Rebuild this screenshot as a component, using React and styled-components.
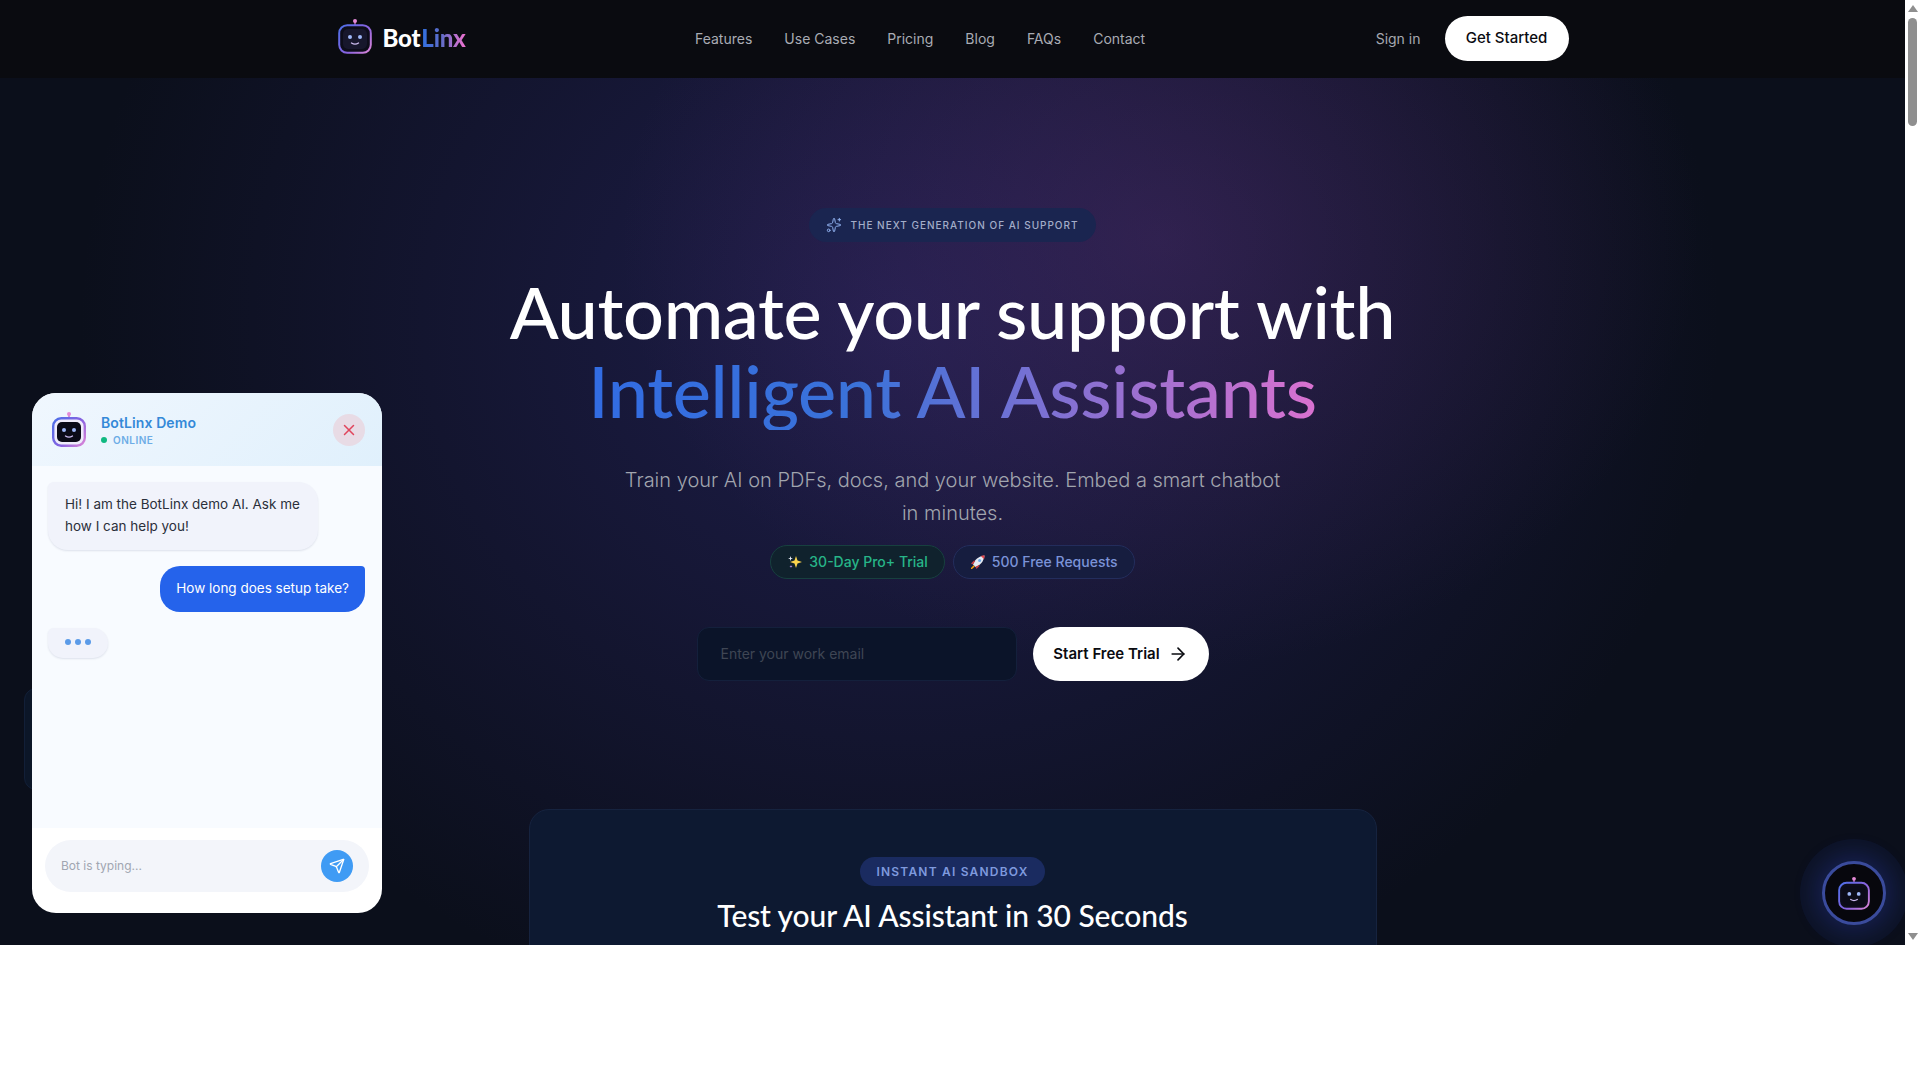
import React from 'react';
import styled, { createGlobalStyle } from 'styled-components';
import { ArrowRight, Send, Sparkles, X } from 'lucide-react';

const HEADING_FONT = '"Lato", "Liberation Sans", sans-serif';

const GlobalStyle = createGlobalStyle`
  html, body {
    margin: 0;
    height: 100%;
    background: #ffffff;
    overflow: hidden;
  }
  * {
    box-sizing: border-box;
  }
  body {
    font-family: "Inter", "Liberation Sans", sans-serif;
  }
`;

const Viewport = styled.div`
  display: flex;
  height: 945px;
  overflow: hidden;
`;

const Page = styled.div`
  position: relative;
  flex: 1;
  min-width: 0;
  overflow: hidden;
  background:
    radial-gradient(ellipse 540px 430px at 1160px 240px, rgba(100, 52, 124, 0.32), transparent 100%),
    radial-gradient(ellipse 820px 720px at 900px 320px, rgba(42, 38, 104, 0.62), transparent 100%),
    #0b0f1b;
`;

const Scrollbar = styled.div`
  width: 15px;
  display: flex;
  flex-direction: column;
  align-items: center;
  background: #ffffff;
`;

const ScrollArrow = styled.div`
  width: 0;
  height: 0;
  margin: ${(p) => (p.$down ? '0 0 5px' : '5px 0 0')};
  border-left: 5px solid transparent;
  border-right: 5px solid transparent;
  border-top: ${(p) => (p.$down ? '7px solid #8f8f8f' : 'none')};
  border-bottom: ${(p) => (p.$down ? 'none' : '7px solid #8f8f8f')};
`;

const ScrollThumb = styled.div`
  width: 9px;
  height: 108px;
  margin-top: 6px;
  border-radius: 5px;
  background: #8f8f8f;
`;

const ScrollSpace = styled.div`
  flex: 1;
`;

const Header = styled.header`
  height: 78px;
  background: #0a0b10;
`;

const HeaderInner = styled.div`
  max-width: 1280px;
  height: 100%;
  margin: 0 auto;
  padding: 0 24px 2px;
  display: flex;
  align-items: center;
`;

const Brand = styled.div`
  width: 358.5px;
  padding: 0 0 3px 1px;
  display: flex;
  align-items: center;
  gap: 11px;
`;

const BrandName = styled.div`
  margin-top: 2px;
  font-family: ${HEADING_FONT};
  font-size: 24px;
  font-weight: 900;
  letter-spacing: -0.2px;
  color: #ffffff;
  display: flex;
  gap: 1px;
`;

const GradientText = styled.span`
  background: linear-gradient(90deg, #2f6fe0 0%, #5f6cc8 45%, #f472d0 100%);
  -webkit-background-clip: text;
  background-clip: text;
  color: transparent;
`;

const Nav = styled.nav`
  display: flex;
  gap: 32px;
`;

const NavLink = styled.a`
  font-size: 14px;
  color: #a9acb4;
`;

const HeaderActions = styled.div`
  margin-left: auto;
  display: flex;
  align-items: center;
  gap: 24px;
`;

const SignIn = styled.a`
  font-size: 14px;
  color: #a6a9b0;
`;

const GetStarted = styled.button`
  height: 45px;
  width: 124px;
  padding: 0 0 2px;
  border: none;
  border-radius: 999px;
  background: #ffffff;
  color: #0a0b10;
  font: 500 15px "Inter", sans-serif;
`;

const Hero = styled.main`
  display: flex;
  flex-direction: column;
  align-items: center;
  padding-top: 130px;
  text-align: center;
`;

const Eyebrow = styled.div`
  height: 34px;
  padding: 0 17px;
  display: flex;
  align-items: center;
  gap: 8px;
  border-radius: 999px;
  background: #1a2550;
  color: #a3adc9;
  font-size: 10px;
  font-weight: 500;
  letter-spacing: 0.1em;
  text-transform: uppercase;

  svg {
    color: #8fb0ee;
  }
`;

const Title = styled.h1`
  margin: 30px 0 0;
  font-family: ${HEADING_FONT};
  font-size: 72px;
  font-weight: 500;
  letter-spacing: -0.35px;
  line-height: 79px;
  color: #ffffff;
`;

const TitleAccent = styled.span`
  display: block;
  background: linear-gradient(90deg, #2f6ae6 0%, #3b72d8 40%, #a070d0 72%, #f472d0 100%);
  -webkit-background-clip: text;
  background-clip: text;
  color: transparent;
`;

const Subtitle = styled.p`
  width: 672px;
  margin: 34px 0 0;
  font-size: 20px;
  font-weight: 300;
  line-height: 33px;
  color: #a1a5ae;
`;

const Perks = styled.div`
  margin-top: 15px;
  display: flex;
  gap: 8px;
`;

const Perk = styled.div`
  height: 34px;
  padding: 0 16px 1px;
  display: flex;
  align-items: center;
  gap: 6px;
  border-radius: 999px;
  font-size: 14px;
  font-weight: 500;
  color: ${(p) => (p.$tone === 'green' ? '#27b588' : '#7b93d8')};
  background: ${(p) => (p.$tone === 'green' ? '#10222d' : '#161d3f')};
  border: 1px solid ${(p) => (p.$tone === 'green' ? '#17403f' : '#232d5c')};
`;

const SignupForm = styled.div`
  margin-top: 48px;
  display: flex;
  gap: 16px;
`;

const EmailField = styled.div`
  width: 320px;
  height: 54px;
  padding: 0 23px 1px;
  display: flex;
  align-items: center;
  border-radius: 12px;
  background: #0b1429;
  border: 1px solid #14203c;
  color: #3f4654;
  font-size: 14px;
`;

const TrialButton = styled.button`
  width: 176px;
  height: 54px;
  padding: 0 0 1px;
  border: none;
  border-radius: 999px;
  background: #ffffff;
  color: #0a0b10;
  font: 600 15px "Inter", sans-serif;
  display: flex;
  align-items: center;
  justify-content: center;
  gap: 8px;
`;

const SandboxCard = styled.section`
  width: 848px;
  margin-top: 128px;
  padding-top: 47px;
  height: 400px;
  flex-shrink: 0;
  display: flex;
  flex-direction: column;
  align-items: center;
  border-radius: 20px;
  background: #0d1931;
  border: 1px solid #16233f;
`;

const SandboxTag = styled.div`
  height: 29px;
  padding: 0 17px;
  display: flex;
  align-items: center;
  border-radius: 999px;
  background: #1a2b60;
  color: #7f9ade;
  font-size: 12px;
  font-weight: 600;
  letter-spacing: 0.1em;
`;

const SandboxTitle = styled.h2`
  margin: 11px 0 0;
  font-family: ${HEADING_FONT};
  font-size: 30px;
  font-weight: 500;
  letter-spacing: -0.1px;
  line-height: 36px;
  color: #ffffff;
`;

// a faint panel that peeks out from behind the chat widget
const ChatBackdrop = styled.div`
  position: absolute;
  left: 24px;
  top: 688px;
  width: 40px;
  height: 102px;
  border-radius: 12px;
  background: #0c1628;
  border: 1px solid #121f38;
`;

const ChatWidget = styled.aside`
  position: absolute;
  left: 32px;
  top: 393px;
  width: 350px;
  height: 520px;
  display: flex;
  flex-direction: column;
  overflow: hidden;
  border-radius: 24px;
  background: #ffffff;
`;

const ChatHeader = styled.div`
  height: 73px;
  padding: 0 17px 0 20px;
  display: flex;
  align-items: center;
  gap: 15px;
  background: linear-gradient(135deg, #f0f7fe, #e0f0fc);
`;

const ChatIdentity = styled.div`
  flex: 1;
  padding-top: 2px;
  display: flex;
  flex-direction: column;
  gap: 3px;
`;

const ChatName = styled.div`
  font-size: 14px;
  font-weight: 600;
  letter-spacing: 0.1px;
  line-height: 16px;
  color: #3489d8;
`;

const ChatStatus = styled.div`
  display: flex;
  align-items: center;
  gap: 6px;
  font-size: 10px;
  font-weight: 600;
  letter-spacing: 0.05em;
  color: #6cace6;
`;

const StatusDot = styled.span`
  width: 6px;
  height: 6px;
  border-radius: 50%;
  background: #10b981;
`;

const CloseButton = styled.button`
  width: 32px;
  height: 32px;
  padding: 0;
  display: flex;
  align-items: center;
  justify-content: center;
  border: none;
  border-radius: 50%;
  background: #e8dbe5;
  color: #e0455c;
`;

const Messages = styled.div`
  flex: 1;
  padding: 16px 17px 0 16px;
  display: flex;
  flex-direction: column;
  align-items: flex-start;
  gap: 16px;
  background: #f8fbff;
`;

const BotBubble = styled.div`
  width: 270px;
  padding: 11px 12px 13px 17px;
  border-radius: 6px 20px 20px 20px;
  background: #f1f3fb;
  box-shadow: 0 1px 2px rgba(30, 40, 90, 0.12);
  color: #2b2f3a;
  font-size: 13.5px;
  line-height: 22px;
`;

const UserBubble = styled.div`
  align-self: flex-end;
  height: 46px;
  padding: 0 16px 2px;
  display: flex;
  align-items: center;
  border-radius: 20px 4px 20px 20px;
  background: #2563eb;
  color: #ffffff;
  font-size: 13.5px;
`;

const TypingBubble = styled.div`
  width: 60px;
  height: 30px;
  padding-bottom: 2px;
  display: flex;
  align-items: center;
  justify-content: center;
  gap: 4px;
  border-radius: 6px 16px 16px 16px;
  background: #f1f3fb;
  box-shadow: 0 1px 2px rgba(30, 40, 90, 0.12);
`;

const TypingDot = styled.span`
  width: 6px;
  height: 6px;
  border-radius: 50%;
  background: #5b9be8;
`;

const ChatFooter = styled.div`
  height: 85px;
  padding: 12px 13px 0 13px;
`;

const ChatInput = styled.div`
  height: 52px;
  padding: 0 16px;
  display: flex;
  align-items: center;
  justify-content: space-between;
  border-radius: 26px;
  background: #f3f5fa;
  color: #a1a6b1;
  font-size: 12px;
`;

const ChatPlaceholder = styled.span`
  margin-bottom: 2px;
`;

const SendButton = styled.button`
  width: 32px;
  height: 32px;
  padding: 0;
  display: flex;
  align-items: center;
  justify-content: center;
  border: none;
  border-radius: 50%;
  background: #3f9bf4;
  color: #ffffff;
`;

const Launcher = styled.button`
  position: absolute;
  right: 19px;
  top: 861px;
  width: 64px;
  height: 64px;
  padding: 0;
  display: flex;
  align-items: center;
  justify-content: center;
  border: 3px solid #3a4b9c;
  border-radius: 50%;
  background: #07070d;
  box-shadow: 0 0 0 22px rgba(40, 60, 150, 0.1), 0 0 20px 8px rgba(40, 60, 170, 0.28);
`;

// the robot mark: the logo and launcher have a glowing frame, the chat avatar a pale one
const BotIcon = ({ id, size = 34, screen = '#17172c', pale = false }) => (
  <svg width={size} height={size * 1.06} viewBox="0 0 34 36" fill="none">
    <defs>
      <linearGradient id={id} x1="0" y1="8" x2="34" y2="36" gradientUnits="userSpaceOnUse">
        <stop offset="0" stopColor="#4a6fe8" />
        <stop offset="0.55" stopColor="#8a63e0" />
        <stop offset="1" stopColor="#e58ad6" />
      </linearGradient>
    </defs>
    <path d="M17 3v5" stroke="#c56fc0" strokeWidth="1.4" />
    <circle cx="17" cy="3" r="2" fill="#e58ad6" />
    <rect
      x="1.2"
      y="7.2"
      width="31.6"
      height="27.6"
      rx="8"
      fill={pale ? '#efecfb' : '#0d0d1a'}
      stroke={`url(#${id})`}
      strokeWidth={pale ? 2.4 : 2}
    />
    <rect x="5" y="11" width="24" height="20" rx="5" fill={screen} />
    <circle cx="12" cy="19" r="2" fill="#9fb8f8" />
    <circle cx="22" cy="19" r="2" fill="#9fb8f8" />
    <path d="M13.5 25c2.2 1.4 4.8 1.4 7 0" stroke="#cdbcf0" strokeWidth="1.4" strokeLinecap="round" />
  </svg>
);

const SparkleEmoji = () => (
  <svg width="16" height="16" viewBox="0 0 16 16">
    <path d="M9 2l1.5 4.5L15 8l-4.5 1.5L9 14l-1.5-4.5L3 8l4.5-1.5z" fill="#fbd34d" />
    <path d="M3.5 2l.6 1.9L6 4.5l-1.9.6L3.5 7l-.6-1.9L1 4.5l1.9-.6z" fill="#e7ecf7" />
    <path d="M4 11l.4 1.1 1.1.4-1.1.4L4 14l-.4-1.1-1.1-.4 1.1-.4z" fill="#b58be8" />
  </svg>
);

const RocketEmoji = () => (
  <svg width="16" height="16" viewBox="0 0 16 16">
    <path d="M3 10.5C4.5 6 8.5 2.2 14.5 1.5 13.8 7.5 10 11.5 5.5 13z" fill="#e4e9f2" />
    <path d="M10.8 1.9c1.2-.3 2.4-.4 3.7-.4 0 1.3-.1 2.5-.4 3.7z" fill="#e5484d" />
    <circle cx="9.6" cy="6.4" r="1.5" fill="#6fa8e8" />
    <path d="M3 10.5L1 9.5l3-3 1.2.4zM5.5 13l1 2 3-3-.4-1.2z" fill="#c43c45" />
    <path d="M3.6 11.2l1.2 1.2L2 15l-1 0 0-1z" fill="#f59e0b" />
  </svg>
);

const navLinks = ['Features', 'Use Cases', 'Pricing', 'Blog', 'FAQs', 'Contact'];

const App = () => (
  <>
    <GlobalStyle />
    <Viewport>
      <Page>
        <Header>
          <HeaderInner>
            <Brand>
              <BotIcon id="brand-bot" />
              <BrandName>
                <span>Bot</span>
                <GradientText>Linx</GradientText>
              </BrandName>
            </Brand>
            <Nav>
              {navLinks.map((link) => (
                <NavLink key={link}>{link}</NavLink>
              ))}
            </Nav>
            <HeaderActions>
              <SignIn>Sign in</SignIn>
              <GetStarted>Get Started</GetStarted>
            </HeaderActions>
          </HeaderInner>
        </Header>

        <Hero>
          <Eyebrow>
            <Sparkles size={16} strokeWidth={1.5} />
            The next generation of AI support
          </Eyebrow>
          <Title>
            Automate your support with
            <TitleAccent>Intelligent AI Assistants</TitleAccent>
          </Title>
          <Subtitle>
            Train your AI on PDFs, docs, and your website. Embed a smart chatbot in minutes.
          </Subtitle>
          <Perks>
            <Perk $tone="green">
              <SparkleEmoji />
              30-Day Pro+ Trial
            </Perk>
            <Perk $tone="blue">
              <RocketEmoji />
              500 Free Requests
            </Perk>
          </Perks>
          <SignupForm>
            <EmailField>Enter your work email</EmailField>
            <TrialButton>
              Start Free Trial
              <ArrowRight size={20} />
            </TrialButton>
          </SignupForm>
          <SandboxCard>
            <SandboxTag>INSTANT AI SANDBOX</SandboxTag>
            <SandboxTitle>Test your AI Assistant in 30 Seconds</SandboxTitle>
          </SandboxCard>
        </Hero>

        <ChatBackdrop />
        <ChatWidget>
          <ChatHeader>
            <BotIcon id="chat-bot" screen="#0b0b18" pale />
            <ChatIdentity>
              <ChatName>BotLinx Demo</ChatName>
              <ChatStatus>
                <StatusDot />
                ONLINE
              </ChatStatus>
            </ChatIdentity>
            <CloseButton>
              <X size={18} />
            </CloseButton>
          </ChatHeader>
          <Messages>
            <BotBubble>Hi! I am the BotLinx demo AI. Ask me how I can help you!</BotBubble>
            <UserBubble>How long does setup take?</UserBubble>
            <TypingBubble>
              <TypingDot />
              <TypingDot />
              <TypingDot />
            </TypingBubble>
          </Messages>
          <ChatFooter>
            <ChatInput>
              <ChatPlaceholder>Bot is typing...</ChatPlaceholder>
              <SendButton>
                <Send size={16} />
              </SendButton>
            </ChatInput>
          </ChatFooter>
        </ChatWidget>

        <Launcher>
          <BotIcon id="launcher-bot" size={32} screen="#0b0b18" />
        </Launcher>
      </Page>
      <Scrollbar>
        <ScrollArrow />
        <ScrollThumb />
        <ScrollSpace />
        <ScrollArrow $down />
      </Scrollbar>
    </Viewport>
  </>
);

export default App;
